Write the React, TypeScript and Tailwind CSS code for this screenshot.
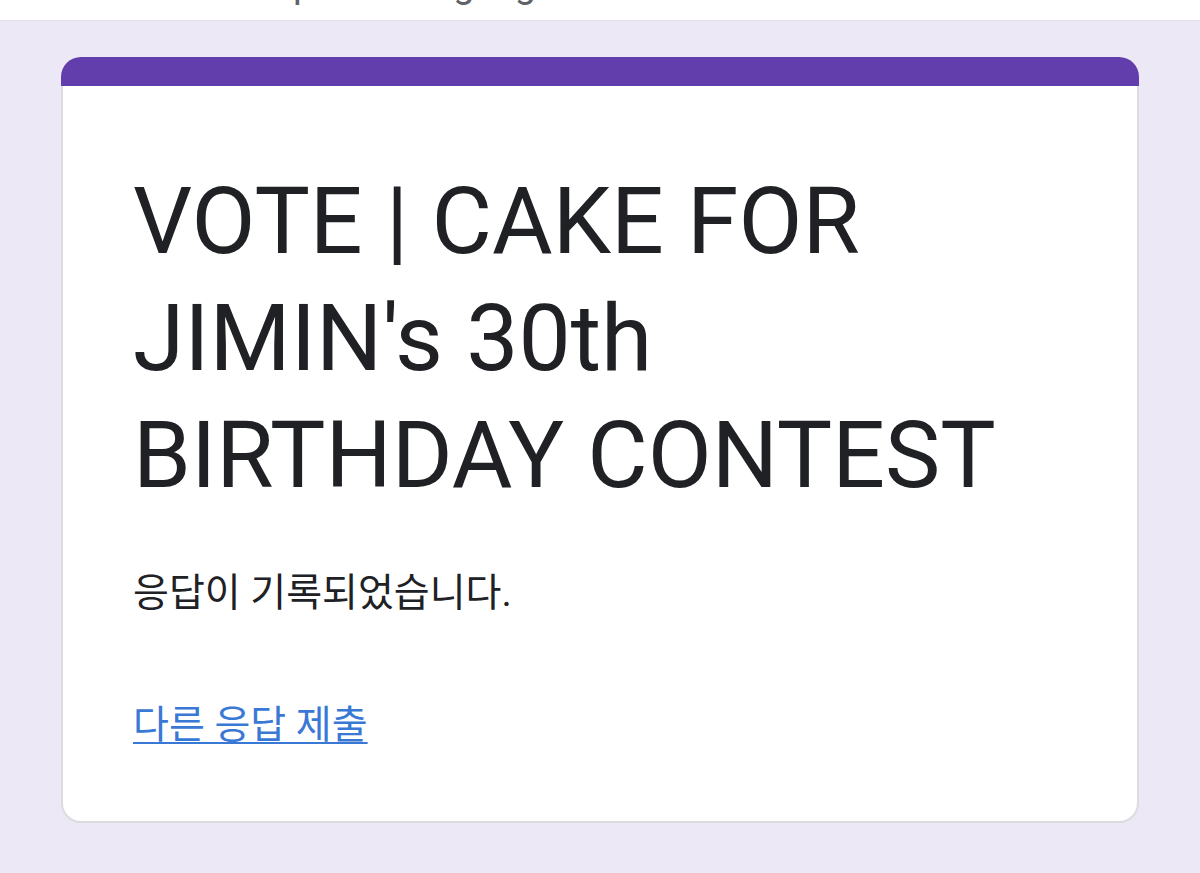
export default function App() {
  return (
    <div className="min-h-[873px] bg-[#ede8f5] font-['Roboto','Noto_Sans_CJK_KR',sans-serif]">
      {/* top bar, text scrolled off so only descenders peek through */}
      <div className="h-[21px] overflow-hidden border-b border-[#e4e0ea] bg-white">
        <div className="-mt-[35px] flex text-[38px] leading-[38px] text-[#5f6368]">
          <span className="ml-[293px]">p</span>
          <span className="ml-[139px]">g</span>
          <span className="ml-[40px]">g</span>
        </div>
      </div>

      <div className="mx-[61px] mt-[36px] pb-[50px]">
        <div className="h-[29px] rounded-t-[20px] bg-[#623ead]" />
        <div className="rounded-b-[20px] border-2 border-t-0 border-[#dadce0] bg-white pb-[68px] pl-[70px] pr-[60px] pt-[77px]">
          <h1 className="text-[93px] font-normal leading-[117px] text-[#202124]">
            VOTE | CAKE FOR
            <br />
            JIMIN's 30th
            <br />
            BIRTHDAY CONTEST
          </h1>
          <p className="mt-[51px] text-[39px] leading-[56px] text-[#202124]">응답이 기록되었습니다.</p>
          <div className="mt-[76px] h-[56px]">
            <a
              href="#"
              className="text-[39px] leading-[56px] text-[#3a78d6] underline decoration-2 underline-offset-[4px]"
            >
              다른 응답 제출
            </a>
          </div>
        </div>
      </div>
    </div>
  );
}
